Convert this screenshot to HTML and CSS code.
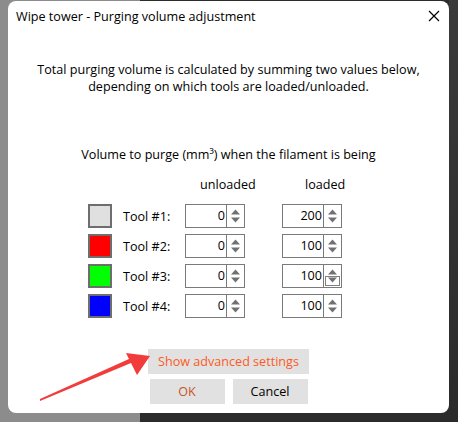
FILE: index.html
```html
<!DOCTYPE html>
<html>
<head>
<meta charset="utf-8">
<link rel="stylesheet" href="styles.css">
</head>
<body>
<div class="desk">
  <div class="dialog">
    <div class="titlebar">
      <span class="title">Wipe tower - Purging volume adjustment</span>
      <svg class="close" width="12" height="12" viewBox="0 0 12 12"><path d="M1 1L11 11M11 1L1 11" stroke="#000" stroke-width="1.2"/></svg>
    </div>
    <div class="content">
      <p class="intro">Total purging volume is calculated by summing two values below,<br>depending on which tools are loaded/unloaded.</p>
      <p class="caption">Volume to purge (mm³) when the filament is being</p>
      <div class="grid">
        <span></span><span></span>
        <span class="hdr hdr-un">unloaded</span>
        <span class="hdr hdr-lo">loaded</span>

        <span class="swatch" style="background:#e0e0e0"></span>
        <span class="label">Tool #1:</span>
        <div class="spin"><span class="val">0</span><span class="arrows"><svg viewBox="0 0 17 22"><path d="M4 9.5L8.5 4.5L13 9.5Z M4 12.5L8.5 17.5L13 12.5Z" fill="#707070"/></svg></span></div>
        <div class="spin spin-lo"><span class="val">200</span><span class="arrows"><svg viewBox="0 0 17 22"><path d="M4 9.5L8.5 4.5L13 9.5Z M4 12.5L8.5 17.5L13 12.5Z" fill="#707070"/></svg></span></div>

        <span class="swatch" style="background:#ff0000"></span>
        <span class="label">Tool #2:</span>
        <div class="spin"><span class="val">0</span><span class="arrows"><svg viewBox="0 0 17 22"><path d="M4 9.5L8.5 4.5L13 9.5Z M4 12.5L8.5 17.5L13 12.5Z" fill="#707070"/></svg></span></div>
        <div class="spin spin-lo"><span class="val">100</span><span class="arrows"><svg viewBox="0 0 17 22"><path d="M4 9.5L8.5 4.5L13 9.5Z M4 12.5L8.5 17.5L13 12.5Z" fill="#707070"/></svg></span></div>

        <span class="swatch" style="background:#00ff00"></span>
        <span class="label">Tool #3:</span>
        <div class="spin"><span class="val">0</span><span class="arrows"><svg viewBox="0 0 17 22"><path d="M4 9.5L8.5 4.5L13 9.5Z M4 12.5L8.5 17.5L13 12.5Z" fill="#707070"/></svg></span></div>
        <div class="spin spin-lo"><span class="val">100</span><span class="arrows"><svg viewBox="0 0 17 22"><path d="M4 9.5L8.5 4.5L13 9.5Z M4 12.5L8.5 17.5L13 12.5Z" fill="#707070"/><rect x="1.5" y="11.5" width="14" height="9" fill="none" stroke="#000" stroke-width="1" stroke-dasharray="1 1"/></svg></span></div>

        <span class="swatch" style="background:#0000ff"></span>
        <span class="label">Tool #4:</span>
        <div class="spin"><span class="val">0</span><span class="arrows"><svg viewBox="0 0 17 22"><path d="M4 9.5L8.5 4.5L13 9.5Z M4 12.5L8.5 17.5L13 12.5Z" fill="#707070"/></svg></span></div>
        <div class="spin spin-lo"><span class="val">100</span><span class="arrows"><svg viewBox="0 0 17 22"><path d="M4 9.5L8.5 4.5L13 9.5Z M4 12.5L8.5 17.5L13 12.5Z" fill="#707070"/></svg></span></div>
      </div>
    </div>
    <div class="buttons">
      <button class="btn btn-adv">Show advanced settings</button>
      <div class="btnrow">
        <button class="btn btn-ok">OK</button>
        <button class="btn">Cancel</button>
      </div>
    </div>
  </div>
</div>
<svg class="arrow" width="458" height="422" viewBox="0 0 458 422"><polygon points="40,401 131,363 137,375 150,356 126,353 129,359 40,399" fill="#f23b3b"/></svg>
</body>
</html>
```

FILE: styles.css
```css
html, body {
  margin: 0;
  padding: 0;
}
body {
  width: 458px;
  height: 422px;
  overflow: hidden;
  position: relative;
  background: linear-gradient(90deg, #8c8c8c 0, #8c8c8c 140px, #2b2b2b 140px);
  font-family: "Open Sans", "Noto Sans", sans-serif;
  font-size: 12.6px;
  color: #000;
}
.desk {
  display: flex;
  padding: 1px 9px 9px 8px;
  height: 422px;
  box-sizing: border-box;
  background: linear-gradient(180deg, #3a3a3a 0, #2b2b2b 100%) right / 9px 100% no-repeat;
}
.dialog {
  flex: 1;
  background: #fff;
  border-radius: 8px;
  display: flex;
  flex-direction: column;
}
.titlebar {
  display: flex;
  align-items: center;
  justify-content: space-between;
  height: 30px;
  padding: 0 9px 0 8px;
}
.title {
  font-size: 12.6px;
}
.close {
  display: block;
}
.content {
  display: flex;
  flex-direction: column;
  align-items: center;
}
.intro {
  margin: 30px 0 0;
  text-align: center;
  line-height: 17px;
}
.caption {
  margin: 51px 0 0;
  line-height: 17px;
}
.grid {
  align-self: flex-start;
  margin: 13px 0 0 80px;
  display: grid;
  grid-template-columns: 24px 73px 60px 97px;
  row-gap: 6px;
  align-items: center;
}
.hdr {
  line-height: 17px;
  margin-bottom: 5px;
  white-space: nowrap;
}
.hdr-un { padding-left: 15px; }
.hdr-lo { padding-left: 60px; }
.swatch {
  width: 24px;
  height: 24px;
  box-sizing: border-box;
  border: 2px solid #6e6e6e;
}
.label {
  padding-left: 11px;
}
.spin {
  width: 60px;
  height: 24px;
  box-sizing: border-box;
  border: 1px solid #7a7a7a;
  display: flex;
  background: #fff;
}
.spin-lo {
  justify-self: end;
}
.val {
  flex: 1;
  text-align: right;
  line-height: 22px;
  padding-right: 1px;
}
.arrows {
  width: 17px;
  border-left: 1px solid #7a7a7a;
  display: block;
}
.arrows svg {
  display: block;
  width: 17px;
  height: 22px;
}
.buttons {
  margin-top: auto;
  padding-bottom: 9px;
  display: flex;
  flex-direction: column;
  align-items: center;
  gap: 5px;
}
.btnrow {
  display: flex;
  gap: 8px;
}
.btn {
  font-family: inherit;
  font-size: 12.6px;
  border: none;
  background: #e1e1e1;
  height: 25px;
  width: 75px;
  padding: 0;
  color: #000;
}
.btn-adv {
  width: 161px;
  color: #ff5a1f;
}
.btn-ok {
  color: #c8551f;
}
.arrow {
  position: absolute;
  left: 0;
  top: 0;
  pointer-events: none;
}
```
